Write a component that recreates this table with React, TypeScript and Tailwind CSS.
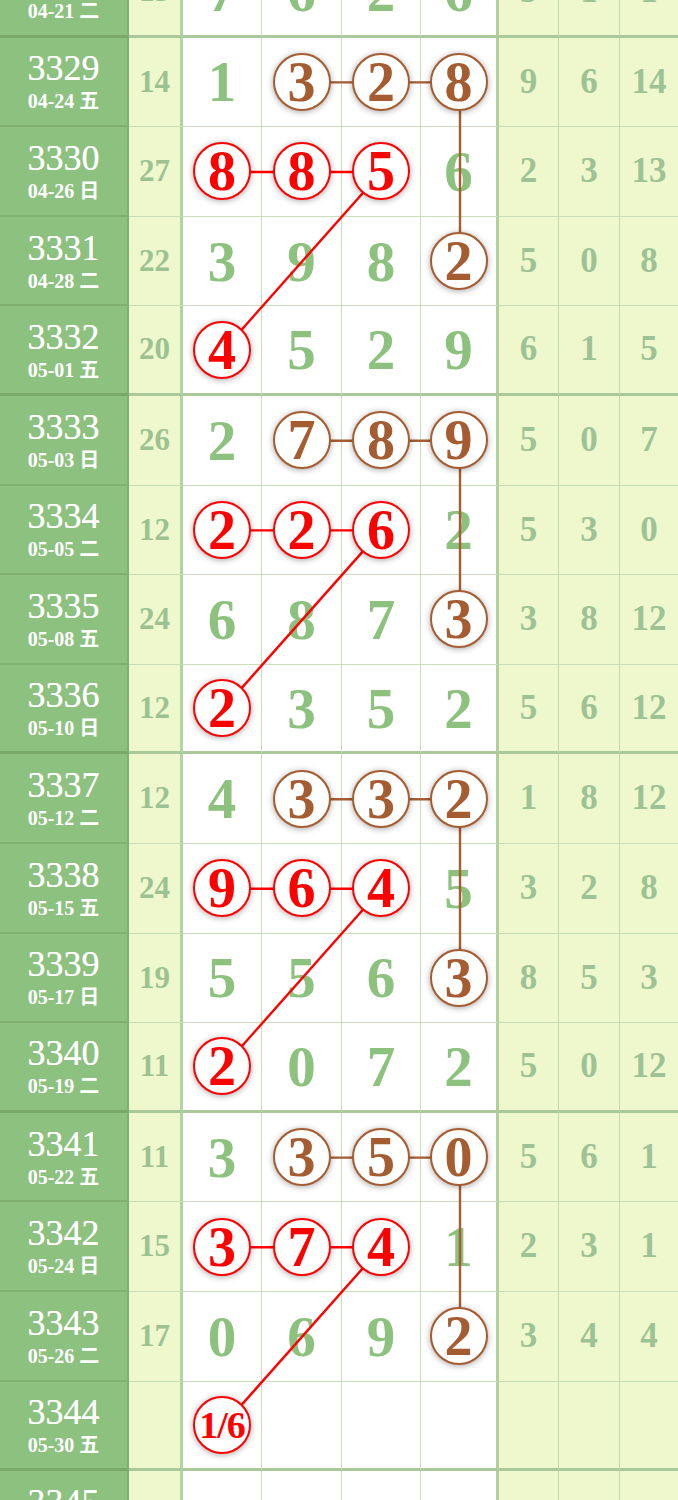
import React from "react";

type Mark = "b" | "r" | null;
type Row = { no: string; date: string; sum: string; d: string[]; r: string[]; m?: Mark[] };

const ROW_H = 89.6;
const CX = [222.5, 302, 381.5, 460];

const A: Mark[] = [null, "b", "b", "b"];
const B: Mark[] = ["r", "r", "r", null];
const C: Mark[] = [null, null, null, "b"];
const D: Mark[] = ["r", null, null, null];

const ROWS: Row[] = [
  { no: "3328", date: "04-21 二", sum: "15", d: ["7", "6", "2", "6"], r: ["5", "1", "1"] },
  { no: "3329", date: "04-24 五", sum: "14", d: ["1", "3", "2", "8"], r: ["9", "6", "14"], m: A },
  { no: "3330", date: "04-26 日", sum: "27", d: ["8", "8", "5", "6"], r: ["2", "3", "13"], m: B },
  { no: "3331", date: "04-28 二", sum: "22", d: ["3", "9", "8", "2"], r: ["5", "0", "8"], m: C },
  { no: "3332", date: "05-01 五", sum: "20", d: ["4", "5", "2", "9"], r: ["6", "1", "5"], m: D },
  { no: "3333", date: "05-03 日", sum: "26", d: ["2", "7", "8", "9"], r: ["5", "0", "7"], m: A },
  { no: "3334", date: "05-05 二", sum: "12", d: ["2", "2", "6", "2"], r: ["5", "3", "0"], m: B },
  { no: "3335", date: "05-08 五", sum: "24", d: ["6", "8", "7", "3"], r: ["3", "8", "12"], m: C },
  { no: "3336", date: "05-10 日", sum: "12", d: ["2", "3", "5", "2"], r: ["5", "6", "12"], m: D },
  { no: "3337", date: "05-12 二", sum: "12", d: ["4", "3", "3", "2"], r: ["1", "8", "12"], m: A },
  { no: "3338", date: "05-15 五", sum: "24", d: ["9", "6", "4", "5"], r: ["3", "2", "8"], m: B },
  { no: "3339", date: "05-17 日", sum: "19", d: ["5", "5", "6", "3"], r: ["8", "5", "3"], m: C },
  { no: "3340", date: "05-19 二", sum: "11", d: ["2", "0", "7", "2"], r: ["5", "0", "12"], m: D },
  { no: "3341", date: "05-22 五", sum: "11", d: ["3", "3", "5", "0"], r: ["5", "6", "1"], m: A },
  { no: "3342", date: "05-24 日", sum: "15", d: ["3", "7", "4", "1"], r: ["2", "3", "1"], m: B },
  { no: "3343", date: "05-26 二", sum: "17", d: ["0", "6", "9", "2"], r: ["3", "4", "4"], m: C },
  { no: "3344", date: "05-30 五", sum: "", d: ["1/6", "", "", ""], r: ["", "", ""], m: D },
  { no: "3345", date: "06-02 二", sum: "", d: ["", "", "", ""], r: ["", "", ""] },
];

const WHITE_W = ["w-[79px]", "w-[80px]", "w-[79px]", "w-[78px]"];
const RIGHT_W = ["w-[60px]", "w-[61px]", "w-[58px]"];

const cy = (k: number) => k * ROW_H + ROW_H / 2;

// 每组 4 期：棕色 (a行 2-4列 + 竖线到 c行)，红色 (b行 1-3列 + 斜线到 d行)
const GROUPS = [1, 5, 9, 13];

const Circle = ({ value, mark }: { value: string; mark: "b" | "r" }) => {
  const small = value.length > 1;
  return (
    <div
      className={`relative z-[2] flex h-[58px] w-[58px] items-center justify-center rounded-full border-2 bg-white shadow-[0_1px_6px_rgba(0,0,0,0.35)] ${
        mark === "r" ? "border-[#ff0000] text-[#ff0000]" : "border-[#a55c30] text-[#a55c30]"
      }`}
    >
      <span className={`font-bold leading-none ${small ? "text-[38px] tracking-[-1px]" : "text-[56px]"}`}>{value}</span>
    </div>
  );
};

const App = () => {
  return (
    <div className="h-[1500px] w-[678px] overflow-hidden bg-white font-['Liberation_Serif','Noto_Sans_CJK_SC',serif]">
      <div className="relative -mt-[52px] flex flex-col">
        {ROWS.map((row, k) => {
          const thick = k % 4 === 0;
          const bottom = thick ? "border-b-[3px] border-b-[#a9c99b]" : "border-b border-b-[#c8debb]";
          return (
            <div key={row.no} className="flex h-[89.6px]">
              {/* 期号 */}
              <div
                className={`flex w-[129px] shrink-0 flex-col items-center justify-center gap-[4px] border-r-2 border-r-[#7fb071] bg-[#8dc17f] text-white ${
                  thick ? "border-b-[3px] border-b-[#78a86a]" : "border-b-2 border-b-[#7fb071]"
                }`}
              >
                <div className="text-[36px] leading-[36px] [text-shadow:0_0_0.6px_#fff]">{row.no}</div>
                <div className="text-[20px] font-bold leading-[22px]">{row.date}</div>
              </div>

              {/* 和值 */}
              <div
                className={`flex w-[54px] shrink-0 items-center justify-center border-r-[3px] border-r-[#b4d2a4] bg-[#eef8cc] text-[31px] font-bold text-[#9cc292] ${bottom}`}
              >
                {row.sum}
              </div>

              {/* 开奖号码 */}
              {row.d.map((v, i) => {
                const mark = row.m?.[i] ?? null;
                return (
                  <div
                    key={i}
                    className={`flex ${WHITE_W[i]} shrink-0 items-center justify-center bg-white ${bottom} ${
                      i === 3 ? "border-r-[3px] border-r-[#b1cfa1]" : "border-r border-r-[#c8debb]"
                    }`}
                  >
                    {mark ? (
                      <Circle value={v} mark={mark} />
                    ) : (
                      <span className="text-[57px] font-bold leading-none text-[#8cc17e]">{v}</span>
                    )}
                  </div>
                );
              })}

              {/* 右侧 */}
              {row.r.map((v, i) => (
                <div
                  key={i}
                  className={`flex ${RIGHT_W[i]} shrink-0 items-center justify-center bg-[#eef8cc] text-[35px] font-bold text-[#9dc395] ${bottom} ${
                    i < 2 ? "border-r border-r-[#c3dab0]" : ""
                  }`}
                >
                  {v}
                </div>
              ))}
            </div>
          );
        })}

        {/* 连线 */}
        <svg className="pointer-events-none absolute left-0 top-0 z-[1]" width={678} height={ROWS.length * ROW_H}>
          {GROUPS.map((a) => (
            <g key={a}>
              <line x1={CX[1]} y1={cy(a)} x2={CX[3]} y2={cy(a)} stroke="#a55c30" strokeWidth={2.4} />
              <line x1={CX[3]} y1={cy(a)} x2={CX[3]} y2={cy(a + 2)} stroke="#a55c30" strokeWidth={2.4} />
              <line x1={CX[0]} y1={cy(a + 1)} x2={CX[2]} y2={cy(a + 1)} stroke="#ff0000" strokeWidth={2.4} />
              <line x1={CX[2]} y1={cy(a + 1)} x2={CX[0]} y2={cy(a + 3)} stroke="#ff0000" strokeWidth={2.4} />
            </g>
          ))}
        </svg>
      </div>
    </div>
  );
};

export default App;
